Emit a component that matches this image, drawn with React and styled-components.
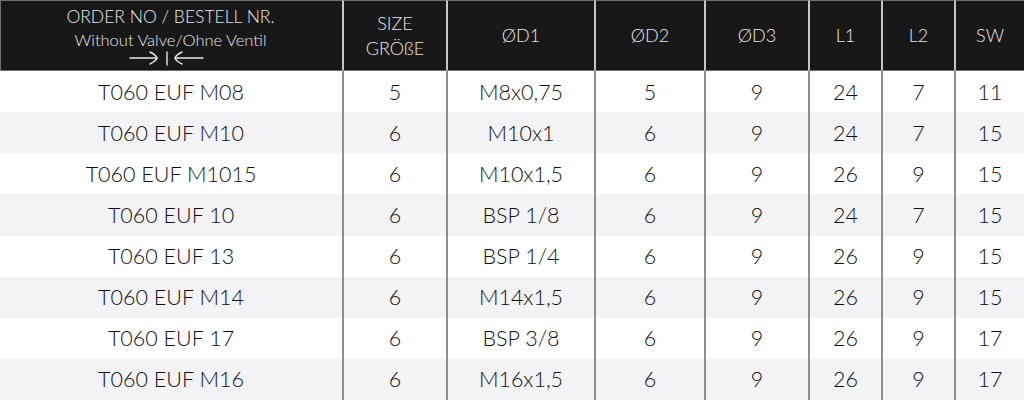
import React from 'react';
import styled, { createGlobalStyle } from 'styled-components';

const GlobalStyle = createGlobalStyle`
  html, body {
    margin: 0;
    padding: 0;
    background: #ffffff;
  }
`;

const Table = styled.div`
  display: grid;
  grid-template-columns: 342px 104px 148px 110px 104px 73px 73px 70px;
  grid-template-rows: 71px repeat(8, 1fr);
  width: 1024px;
  height: 400px;
  font-family: 'Lato', 'DejaVu Sans', sans-serif;
  font-weight: 300;
  overflow: hidden;
`;

const HeadCell = styled.div`
  background: #181818;
  color: #e6e6e6;
  display: flex;
  flex-direction: column;
  align-items: center;
  justify-content: center;
  text-align: center;
  border-top: 1px solid #6e6e6e;
  border-bottom: 1px solid #6e6e6e;
  border-left: ${(p) => (p.first ? '1px solid #6e6e6e' : '2px solid #c4c4c4')};
  font-size: 18px;
  line-height: 25px;
  box-sizing: border-box;
`;

const HeadMain = styled.div`
  font-size: 17.5px;
  line-height: 20px;
  margin-top: 1px;
  margin-left: -2px;
`;

const HeadSub = styled.div`
  font-size: 16.5px;
  line-height: 18px;
  margin-top: 4px;
  margin-left: -2px;
`;

const Cell = styled.div`
  background: ${(p) => (p.shade ? '#f3f3f5' : '#ffffff')};
  color: #0f0f0f;
  display: flex;
  align-items: center;
  justify-content: center;
  font-size: 21.5px;
  border-left: ${(p) => (p.first ? 'none' : '2px solid #8e8e8e')};
  box-sizing: border-box;
`;

const IconWrap = styled.div`
  display: flex;
  margin-top: 1px;
  margin-left: -10px;
`;

const ValveIcon = () => (
  <IconWrap>
    <svg width="76" height="16" viewBox="0 0 76 16">
      <g stroke="#e6e6e6" strokeWidth="1.4" fill="none" strokeLinecap="round">
        <line x1="1" y1="8" x2="28" y2="8" />
        <path d="M21 2 Q27 5 28 8 Q27 11 21 14" />
        <line x1="38" y1="2" x2="38" y2="15" />
        <path d="M53 2 Q47 5 46 8 Q47 11 53 14" />
        <line x1="46" y1="8" x2="74" y2="8" />
      </g>
    </svg>
  </IconWrap>
);

const rows = [
  ['T060 EUF M08', '5', 'M8x0,75', '5', '9', '24', '7', '11'],
  ['T060 EUF M10', '6', 'M10x1', '6', '9', '24', '7', '15'],
  ['T060 EUF M1015', '6', 'M10x1,5', '6', '9', '26', '9', '15'],
  ['T060 EUF 10', '6', 'BSP 1/8', '6', '9', '24', '7', '15'],
  ['T060 EUF 13', '6', 'BSP 1/4', '6', '9', '26', '9', '15'],
  ['T060 EUF M14', '6', 'M14x1,5', '6', '9', '26', '9', '15'],
  ['T060 EUF 17', '6', 'BSP 3/8', '6', '9', '26', '9', '17'],
  ['T060 EUF M16', '6', 'M16x1,5', '6', '9', '26', '9', '17'],
];

const App = () => (
  <>
    <GlobalStyle />
    <Table>
      <HeadCell first>
        <HeadMain>ORDER NO / BESTELL NR.</HeadMain>
        <HeadSub>Without Valve/Ohne Ventil</HeadSub>
        <ValveIcon />
      </HeadCell>
      <HeadCell>
        <div>SIZE</div>
        <div>GRÖßE</div>
      </HeadCell>
      <HeadCell>ØD1</HeadCell>
      <HeadCell>ØD2</HeadCell>
      <HeadCell>ØD3</HeadCell>
      <HeadCell>L1</HeadCell>
      <HeadCell>L2</HeadCell>
      <HeadCell>SW</HeadCell>
      {rows.map((r, i) =>
        r.map((v, j) => (
          <Cell key={`${i}-${j}`} first={j === 0} shade={i % 2 === 1}>
            {v}
          </Cell>
        ))
      )}
    </Table>
  </>
);

export default App;
